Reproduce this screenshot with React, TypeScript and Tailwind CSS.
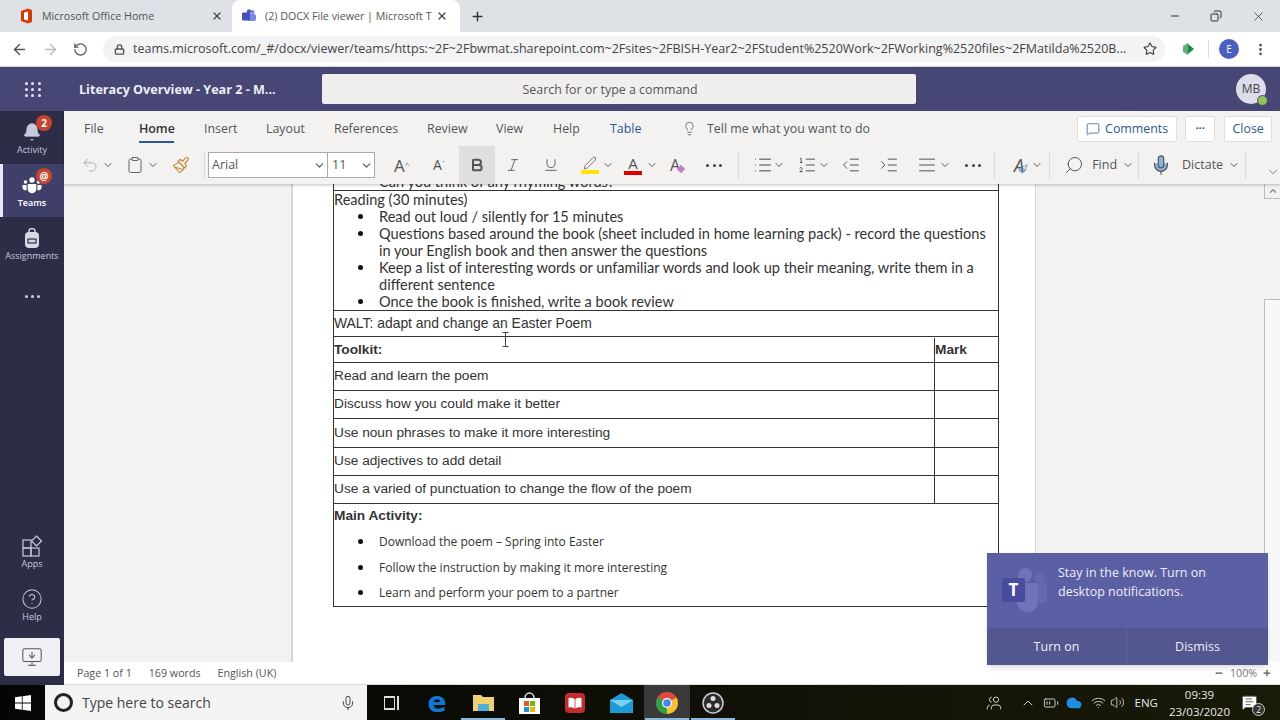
import type { ReactNode } from 'react';
import {
  ArrowLeft,
  ArrowRight,
  RotateCw,
  Lock,
  Star,
  X,
  Plus,
  Minus,
  Copy,
  ChevronDown,
  ChevronUp,
  Undo2,
  Clipboard,
  Paintbrush,
  Pen,
  Bold,
  Italic,
  Underline,
  Lightbulb,
  MessageSquare,
  Search,
  Mic,
  MoreVertical,
  Bell,
  HelpCircle,
  MonitorDown,
  List,
  ListOrdered,
  IndentDecrease,
  IndentIncrease,
  AlignJustify,
  Wifi,
  Volume2,
  Cloud,
  BatteryMedium,
  Users,
  MessageSquareText,
} from 'lucide-react';

const sans = { fontFamily: '"Open Sans", "Noto Sans", sans-serif' };
const arial = { fontFamily: '"Liberation Sans", Arial, sans-serif' };
const comic = { fontFamily: 'Lato, "Noto Sans", sans-serif' };

function RailItem({ label, icon, active }: { label: string; icon: ReactNode; active?: boolean }) {
  return (
    <div className={`relative flex h-[53px] flex-col items-center pt-[11px] ${active ? 'bg-[#3f4069] text-white' : 'text-[#c8c9dc]'}`}>
      {active && <div className="absolute top-0 bottom-0 left-0 w-[3px] bg-[#e8e8f8]" />}
      <div className="flex h-[20px] items-center justify-center">{icon}</div>
      <span className={`mt-[2px] text-[9px] leading-[11px] ${active ? 'font-semibold' : ''}`}>{label}</span>
    </div>
  );
}

function TaskIcon({ children, active, underline }: { children: ReactNode; active?: boolean; underline?: boolean }) {
  return (
    <div className={`relative flex h-[35px] w-[46px] items-center justify-center ${active ? 'bg-[#3a3a3a]' : ''}`}>
      {children}
      {underline && <div className="absolute right-[1px] bottom-0 left-[1px] h-[2px] bg-[#8cb8dc]" />}
    </div>
  );
}

function Dots({ className }: { className: string }) {
  return (
    <div className={`flex w-[16px] justify-between ${className}`}>
      <div className="h-[3px] w-[3px] rounded-full bg-[#444]" />
      <div className="h-[3px] w-[3px] rounded-full bg-[#444]" />
      <div className="h-[3px] w-[3px] rounded-full bg-[#444]" />
    </div>
  );
}

function Divider({ className }: { className: string }) {
  return <div className={`h-[28px] w-px bg-[#dcdad8] ${className}`} />;
}

function Bullet({ children, small }: { children: ReactNode; small?: boolean }) {
  return (
    <li className="flex">
      <div className={`mr-[16px] ml-[24px] h-[5px] w-[5px] shrink-0 rounded-full bg-[#111] ${small ? 'mt-[10px]' : 'mt-[6px]'}`} />
      <div>{children}</div>
    </li>
  );
}

const toolkit = [
  'Read and learn the poem',
  'Discuss how you could make it better',
  'Use noun phrases to make it more interesting',
  'Use adjectives to add detail',
  'Use a varied of punctuation to change the flow of the poem',
];

export default function App() {
  return (
    <div className="flex h-[720px] w-[1280px] flex-col overflow-hidden bg-white text-[#444]" style={sans}>
      {/* browser tabs */}
      <div className="flex h-[32px] items-end bg-[#dee1e6] pl-[8px]">
        <div className="flex h-[32px] w-[224px] items-center pl-[12px] pr-[9px] text-[10.7px] text-[#555]">
          <svg width="13" height="16" viewBox="0 0 13 16" className="mr-[9px] shrink-0">
            <path d="M1 3 L8 0.5 L12 2 V14 L8 15.5 L1 13 Z" fill="#d83b01" />
            <path d="M4 4.5 L8 3.5 V12.5 L4 11.5 Z" fill="#fff" />
          </svg>
          <span className="flex-1">Microsoft Office Home</span>
          <X size={12} strokeWidth={2.5} className="text-[#444]" />
        </div>
        <div className="flex h-[32px] w-[228px] items-center rounded-t-[8px] bg-white pl-[10px] pr-[12px] text-[10.7px] text-[#555]">
          <svg width="14" height="14" viewBox="0 0 14 14" className="mr-[9px] shrink-0">
            <circle cx="10.5" cy="3" r="2" fill="#7b83eb" />
            <circle cx="7" cy="2.5" r="2.2" fill="#5059c9" />
            <rect x="5" y="5" width="9" height="7" rx="2" fill="#7b83eb" />
            <rect x="0" y="3.5" width="8" height="8" rx="1" fill="#464eb8" />
          </svg>
          <span className="flex-1 overflow-hidden whitespace-nowrap">(2) DOCX File viewer | Microsoft T</span>
          <X size={12} strokeWidth={2.5} className="ml-[4px] shrink-0 text-[#444]" />
        </div>
        <div className="flex h-[32px] w-[34px] items-center justify-center">
          <Plus size={15} strokeWidth={2.2} className="text-[#333]" />
        </div>
        <div className="flex-1" />
        <div className="flex h-[32px] items-center gap-[29px] pr-[14px] text-[#333]">
          <Minus size={12} />
          <Copy size={12} className="-scale-x-100" />
          <X size={15} strokeWidth={1.2} />
        </div>
      </div>

      {/* address bar */}
      <div className="flex h-[34px] items-center bg-white pl-[11px] pr-[10px]">
        <ArrowLeft size={17} className="text-[#555]" />
        <ArrowRight size={17} className="ml-[14px] text-[#bbb]" />
        <RotateCw size={15} className="ml-[14px] -scale-x-100 text-[#555]" />
        <div className="ml-[15px] flex h-[26px] w-[1062px] items-center rounded-full bg-[#f1f3f4] pl-[11px] pr-[8px]">
          <Lock size={11} strokeWidth={3} className="text-[#555]" />
          <span className="ml-[8px] flex-1 overflow-hidden whitespace-nowrap text-[12.5px] text-[#444]">
            teams.microsoft.com/_#/docx/viewer/teams/https:~2F~2Fbwmat.sharepoint.com~2Fsites~2FBISH-Year2~2FStudent%2520Work~2FWorking%2520files~2FMatilda%2520B...
          </span>
          <Star size={14} className="ml-[12px] text-[#444]" />
        </div>
        <div className="ml-[13px] flex w-[22px] justify-center">
          <svg width="12" height="14" viewBox="0 0 12 14">
            <path d="M0 4 L5 1 V13 L0 10 Z" fill="#5fae7c" />
            <path d="M5 2 L11 7 L5 12 Z" fill="#1c8a46" />
          </svg>
        </div>
        <div className="ml-[8px] h-[18px] w-px bg-[#ddd]" />
        <div className="ml-[10px] flex h-[20px] w-[20px] items-center justify-center rounded-full bg-[#4a5fc1] text-[10px] text-white">E</div>
        <MoreVertical size={15} strokeWidth={2.5} className="ml-[14px] text-[#555]" />
      </div>

      {/* teams header */}
      <div className="relative flex h-[45px] items-center border-t border-[#d8d8e0] bg-[#464775]">
        <div className="ml-[25px] grid w-[16px] grid-cols-3 gap-[3px]">
          {[0, 1, 2, 3, 4, 5, 6, 7, 8].map((i) => (
            <div key={i} className="h-[3px] w-[3px] rounded-full bg-[#e6e6f0]" />
          ))}
        </div>
        <div className="ml-[38px] w-[243px] pt-[2px] text-[12.6px] font-bold text-[#eeeef5]">Literacy Overview - Year 2 - M...</div>
        <div className="flex h-[30px] w-[594px] items-center justify-center rounded-[2px] bg-[#f0efee] pt-[2px] pr-[18px] text-[12.4px] text-[#555]">
          Search for or type a command
        </div>
        <div className="absolute top-[7px] right-[14px] flex h-[30px] w-[30px] items-center justify-center rounded-full bg-[#dcdcec] text-[12px] text-[#444]">
          MB
          <div className="absolute right-[-2px] bottom-[-2px] h-[11px] w-[11px] rounded-full border border-[#464775] bg-[#92c353]" />
        </div>
      </div>

      <div className="flex flex-1 overflow-hidden">
        {/* teams rail */}
        <div className="flex w-[64px] shrink-0 flex-col bg-[#2d2d48]">
          <div className="relative">
            <RailItem label="Activity" icon={<Bell size={20} fill="currentColor" strokeWidth={1} />} />
            <div className="absolute top-[4px] left-[36px] flex h-[16px] w-[16px] items-center justify-center rounded-full bg-[#c8442f] text-[10px] font-bold text-white">2</div>
          </div>
          <div className="relative">
            <RailItem
              active
              label="Teams"
              icon={
                <svg width="20" height="20" viewBox="0 0 20 20" fill="currentColor">
                  <circle cx="10" cy="5" r="2.7" />
                  <circle cx="3.5" cy="7" r="1.8" />
                  <circle cx="16.5" cy="7" r="1.8" />
                  <path d="M5.7 9 H14.3 V14 A4.3 4.3 0 0 1 5.7 14 Z" />
                  <path d="M0.5 10 H4.6 V15 A3 3 0 0 1 0.5 13 Z" />
                  <path d="M15.4 10 H19.5 V13 A3 3 0 0 1 15.4 15 Z" />
                </svg>
              }
            />
            <div className="absolute top-[4px] left-[36px] flex h-[16px] w-[16px] items-center justify-center rounded-full bg-[#c8442f] text-[10px] font-bold text-white">@</div>
          </div>
          <RailItem
            label="Assignments"
            icon={
              <svg width="20" height="20" viewBox="0 0 20 20">
                <path d="M7 5 V3 A3 2.5 0 0 1 13 3 V5" fill="none" stroke="#d8d8e6" strokeWidth="1.4" />
                <rect x="3" y="4" width="14" height="16" rx="4" fill="#d8d8e6" />
                <rect x="6" y="11" width="8" height="4" fill="none" stroke="#2d2d48" strokeWidth="1.2" />
              </svg>
            }
          />
          <div className="flex h-[52px] items-center justify-center gap-[3px]">
            <div className="h-[3px] w-[3px] rounded-full bg-[#d0d0e0]" />
            <div className="h-[3px] w-[3px] rounded-full bg-[#d0d0e0]" />
            <div className="h-[3px] w-[3px] rounded-full bg-[#d0d0e0]" />
          </div>
          <div className="flex-1" />
          <RailItem
            label="Apps"
            icon={
              <svg width="22" height="22" viewBox="0 0 22 22" fill="none" stroke="currentColor" strokeWidth="1.2">
                <rect x="2" y="5" width="8" height="8" />
                <rect x="2" y="13" width="8" height="8" />
                <rect x="10" y="13" width="8" height="8" />
                <path d="M15.5 1 L20.5 6 L15.5 11 L10.5 6 Z" />
              </svg>
            }
          />
          <RailItem label="Help" icon={<HelpCircle size={22} strokeWidth={1.1} />} />
          <div className="mx-[4px] mt-[7px] mb-[9px] flex h-[38px] items-center justify-center rounded-[2px] bg-[#f0f0f7] text-[#555]">
            <MonitorDown size={22} strokeWidth={1.1} />
          </div>
        </div>

        {/* word viewer */}
        <div className="relative flex flex-1 flex-col bg-[#f3f2f1]">
          {/* ribbon */}
          <div className="relative z-10 h-[73px] shrink-0 bg-[#f3f2f1] shadow-[0_1px_3px_rgba(0,0,0,0.25)]">
            <div className="flex h-[35px] items-center pl-[20px] text-[12.4px] text-[#555]">
              <span className="w-[55px] pt-[1px]">File</span>
              <span className="relative w-[65px] pt-[1px] font-semibold text-[#333]">
                Home
                <span className="absolute top-[22px] left-0 h-[2px] w-[35px] bg-[#2b579a]" />
              </span>
              <span className="w-[62px] pt-[1px]">Insert</span>
              <span className="w-[68px] pt-[1px]">Layout</span>
              <span className="w-[93px] pt-[1px]">References</span>
              <span className="w-[69px] pt-[1px]">Review</span>
              <span className="w-[57px] pt-[1px]">View</span>
              <span className="w-[57px] pt-[1px]">Help</span>
              <span className="w-[72px] pt-[1px] text-[#2b579a]">Table</span>
              <Lightbulb size={15} strokeWidth={1.2} className="mr-[10px]" />
              <span className="pt-[1px]">Tell me what you want to do</span>
              <div className="flex-1" />
              <div className="flex h-[26px] w-[100px] items-center justify-center rounded-[2px] border border-[#e1dfdd] bg-white pt-[1px] text-[#2b579a]">
                <MessageSquare size={14} strokeWidth={1.3} className="mr-[5px]" />
                Comments
              </div>
              <div className="ml-[8px] flex h-[26px] w-[30px] items-center justify-center rounded-[2px] border border-[#e1dfdd] bg-white text-[11px] font-bold text-[#2b579a]">···</div>
              <div className="mr-[8px] ml-[9px] flex h-[26px] w-[48px] items-center justify-center rounded-[2px] border border-[#e1dfdd] bg-white pt-[1px] text-[#2b579a]">Close</div>
            </div>
            <div className="flex h-[38px] items-center pl-[17px] text-[#555]">
              <Undo2 size={18} strokeWidth={1.2} className="text-[#aaa]" />
              <ChevronDown size={12} className="ml-[3px]" />
              <Clipboard size={18} strokeWidth={1.2} className="ml-[12px]" />
              <ChevronDown size={12} className="ml-[3px]" />
              <Paintbrush size={18} strokeWidth={1.5} className="ml-[13px] text-[#c8862a]" />
              <Divider className="ml-[14px]" />
              <div className="ml-[3px] flex h-[26px] w-[120px] items-center justify-between border border-[#aaa] bg-white pl-[3px] pr-[1px] text-[12.5px]">
                Arial
                <ChevronDown size={13} />
              </div>
              <div className="-ml-px flex h-[26px] w-[48px] items-center justify-between border border-[#aaa] bg-white pl-[4px] pr-[1px] text-[12.5px]">
                11
                <ChevronDown size={13} />
              </div>
              <span className="ml-[19px] w-[16px] text-[17px] leading-none">A<sup className="text-[8px] text-[#777]">^</sup></span>
              <span className="ml-[23px] w-[12px] text-[14px] leading-none">A<sup className="text-[8px] text-[#3b82c4]">ˇ</sup></span>
              <div className="ml-[14px] flex h-[38px] w-[36px] items-center justify-center bg-[#e1dfdd]">
                <Bold size={16} strokeWidth={3} />
              </div>
              <Italic size={16} strokeWidth={1.3} className="ml-[10px]" />
              <Underline size={16} strokeWidth={1.3} className="ml-[22px]" />
              <div className="ml-[22px] flex w-[18px] flex-col items-center">
                <Pen size={14} strokeWidth={1.3} />
                <div className="h-[4px] w-[18px] bg-[#ffe600]" />
              </div>
              <ChevronDown size={12} className="ml-[3px]" />
              <div className="ml-[10px] flex w-[18px] flex-col items-center text-[15px] leading-[15px]">
                A
                <div className="h-[4px] w-[18px] bg-[#e00000]" />
              </div>
              <ChevronDown size={12} className="ml-[4px]" />
              <span className="ml-[12px] text-[16px] leading-none">A</span>
              <div className="-ml-[2px] mt-[8px] h-[6px] w-[6px] rotate-45 bg-[#c27fc4]" />
              <Dots className="ml-[22px]" />
              <Divider className="ml-[16px]" />
              <List size={20} strokeWidth={1.2} className="ml-[14px] text-[#444]" />
              <ChevronDown size={12} />
              <ListOrdered size={20} strokeWidth={1.2} className="ml-[12px]" />
              <ChevronDown size={12} className="ml-[1px]" />
              <IndentDecrease size={20} strokeWidth={1.2} className="ml-[11px]" />
              <IndentIncrease size={20} strokeWidth={1.2} className="ml-[18px]" />
              <AlignJustify size={20} strokeWidth={1.2} className="ml-[18px]" />
              <ChevronDown size={12} className="ml-[2px]" />
              <Dots className="ml-[14px]" />
              <Divider className="ml-[13px]" />
              <div className="relative ml-[18px] flex w-[12px] justify-center text-[18px] italic leading-none">
                A
                <Paintbrush size={10} strokeWidth={2} className="absolute right-[-3px] bottom-0 text-[#3b82c4]" />
              </div>
              <ChevronDown size={12} className="ml-[6px]" />
              <Divider className="ml-[6px]" />
              <Search size={20} strokeWidth={1.2} className="ml-[14px] -scale-x-100" />
              <span className="ml-[8px] text-[12.5px]">Find</span>
              <ChevronDown size={12} className="ml-[5px]" />
              <Divider className="ml-[4px]" />
              <Mic size={22} strokeWidth={1.3} fill="#8ab4e0" className="ml-[11px]" />
              <span className="ml-[10px] text-[12.5px]">Dictate</span>
              <ChevronDown size={12} className="ml-[5px]" />
              <Divider className="ml-[5px]" />
              <ChevronDown size={14} strokeWidth={1.2} className="ml-[20px] mt-[14px]" />
            </div>
          </div>

          {/* document canvas */}
          <div className="flex flex-1 overflow-hidden">
            <div className="w-[229px] shrink-0 border-r-2 border-[#d8d8d8]" />
            <div className="w-[743px] shrink-0 overflow-hidden border-r border-[#d8d8d8] bg-white pl-[40px]">
              <div className="-mt-[27px] w-[666px] text-[#333]">
                {/* reading block */}
                <div className="flex h-[34px] flex-col justify-end border-x border-b border-[#333] text-[14.55px] leading-[17px]" style={comic}>
                  <ul>
                    <Bullet>Can you think of any rhyming words?</Bullet>
                  </ul>
                </div>
                <div className="h-[120px] border-x border-b border-[#333] text-[14.55px] leading-[17px]" style={comic}>
                  <div className="h-[17px]">Reading (30 minutes)</div>
                  <ul>
                    <Bullet>Read out loud / silently for 15 minutes</Bullet>
                    <Bullet>Questions based around the book (sheet included in home learning pack) - record the questions in your English book and then answer the questions</Bullet>
                    <Bullet>Keep a list of interesting words or unfamiliar words and look up their meaning, write them in a different sentence</Bullet>
                    <Bullet>Once the book is finished, write a book review</Bullet>
                  </ul>
                </div>
                <div style={arial} className="text-[13.7px]">
                  <div className="flex h-[26px] items-center border-x border-b border-[#333] text-[13.9px]">WALT: adapt and change an Easter Poem</div>
                  <div className="flex h-[26px] border-x border-b border-[#333] pt-[1px] font-bold">
                    <div className="flex flex-1 items-center border-r border-[#333]">Toolkit:</div>
                    <div className="flex w-[63px] items-center">Mark</div>
                  </div>
                  {toolkit.map((t, i) => (
                    <div key={t} className={`flex border-x border-b border-[#333] ${i === 2 ? 'h-[29px]' : 'h-[28px]'}`}>
                      <div className="flex flex-1 items-center border-r border-[#333]">{t}</div>
                      <div className="w-[63px]" />
                    </div>
                  ))}
                  <div className="h-[103px] border-x border-b border-[#333]">
                    <div className="flex h-[25px] items-center font-bold">Main Activity:</div>
                    <ul className="text-[12px] leading-[25.5px]" style={sans}>
                      <Bullet small>Download the poem – Spring into Easter</Bullet>
                      <Bullet small>Follow the instruction by making it more interesting</Bullet>
                      <Bullet small>Learn and perform your poem to a partner</Bullet>
                    </ul>
                  </div>
                </div>
              </div>
            </div>
            <div className="flex-1" />
            {/* scrollbar */}
            <div className="flex w-[16px] flex-col">
              <div className="flex h-[15px] items-center justify-center border-b border-l border-[#bbb]">
                <ChevronUp size={10} strokeWidth={3} className="text-[#888]" />
              </div>
              <div className="h-[100px]" />
              <div className="flex-1 border-t border-l border-[#bbb] bg-[#f8f8f8]" />
            </div>
          </div>

          {/* status bar */}
          <div className="flex h-[23px] shrink-0 items-center border-b border-[#ddd] bg-white pl-[13px] pr-[8px] text-[10.7px] text-[#555]">
            <span>Page 1 of 1</span>
            <span className="ml-[17px]">169 words</span>
            <span className="ml-[17px]">English (UK)</span>
            <div className="flex-1" />
            <Minus size={10} strokeWidth={3} />
            <span className="ml-[6px] text-[#777]">100%</span>
            <Plus size={10} strokeWidth={3} className="ml-[5px]" />
          </div>

          {/* notification toast */}
          <div className="absolute top-[442px] left-[923px] z-20 flex h-[112px] w-[281px] flex-col bg-[#5b5fa3] text-[#eeeef8] shadow-md">
            <div className="flex flex-1 pl-[15px] pt-[10px] text-[12.5px] leading-[19px]">
              <svg width="46" height="46" viewBox="0 0 46 46" className="mt-[5px] mr-[10px] shrink-0">
                <circle cx="23" cy="7" r="7" fill="#7073b8" />
                <circle cx="38" cy="10" r="5" fill="#6669ad" />
                <rect x="36" y="15" width="9" height="20" rx="3" fill="#6669ad" />
                <path d="M15 15 H36 V34 A10.5 10.5 0 0 1 15 34 Z" fill="#7073b8" />
                <rect x="0" y="10" width="23" height="24" rx="2" fill="#474c9f" />
                <text x="11.5" y="28" textAnchor="middle" fontSize="17" fontWeight="700" fill="#fff">T</text>
              </svg>
              <div>
                Stay in the know. Turn on
                <br />
                desktop notifications.
              </div>
            </div>
            <div className="flex h-[37px] text-[12.5px]">
              <div className="flex w-[140px] items-center justify-center border-r border-[#5f63a5] bg-[#53568f] pt-[2px]">Turn on</div>
              <div className="flex flex-1 items-center justify-center bg-[#53568f] pt-[2px]">Dismiss</div>
            </div>
          </div>

          {/* text cursor */}
          <svg width="7" height="15" viewBox="0 0 7 15" className="absolute top-[221px] left-[438px] z-10">
            <path d="M0.5 0.5 H6.5 M3.5 0.5 V14.5 M0.5 14.5 H6.5" fill="none" stroke="#444" strokeWidth="1" />
          </svg>
        </div>
      </div>

      {/* windows taskbar */}
      <div className="flex h-[35px] shrink-0 items-center bg-linear-to-r from-[#050505] to-[#1a1a08]">
        <div className="flex w-[45px] justify-center">
          <svg width="16" height="16" viewBox="0 0 16 16">
            <path d="M0 2.3 L6.8 1.3 V7.6 H0 Z M7.6 1.2 L16 0 V7.6 H7.6 Z M0 8.4 H6.8 V14.7 L0 13.7 Z M7.6 8.4 H16 V16 L7.6 14.8 Z" fill="#fff" />
          </svg>
        </div>
        <div className="mr-[1px] flex h-[35px] w-[322px] items-center bg-[#f3f3f3] pl-[9px] text-[#444]">
          <div className="h-[19px] w-[19px] rounded-full border-[3px] border-[#222]" />
          <span className="ml-[9px] flex-1 text-[14px]">Type here to search</span>
          <Mic size={16} strokeWidth={1.5} className="mr-[11px]" />
        </div>
        <TaskIcon>
          <div className="flex items-center gap-[2px]">
            <div className="h-[14px] w-[11px] border-x border-y-2 border-[#ddd]" />
            <div className="h-[14px] w-[2px] bg-[#ddd]" />
          </div>
        </TaskIcon>
        <TaskIcon>
          <span className="text-[28px] leading-none font-bold text-[#0f78d4]" style={{ fontFamily: '"DejaVu Sans", sans-serif' }}>e</span>
        </TaskIcon>
        <TaskIcon underline>
          <svg width="21" height="19" viewBox="0 0 21 19">
            <path d="M0 2 H8 L10 4 H21 V18 H0 Z" fill="#f2cf70" />
            <rect x="5" y="11" width="11" height="7" fill="#4fb0d8" />
          </svg>
        </TaskIcon>
        <TaskIcon>
          <svg width="21" height="22" viewBox="0 0 21 22">
            <path d="M0 6 H21 V22 H0 Z" fill="#fff" />
            <path d="M6 6 A4.5 5 0 0 1 15 6" fill="none" stroke="#ddd" strokeWidth="1.5" />
            <rect x="5" y="9" width="5" height="5" fill="#e8562a" />
            <rect x="11" y="9" width="5" height="5" fill="#7ab800" />
            <rect x="5" y="15" width="5" height="5" fill="#1e90d8" />
            <rect x="11" y="15" width="5" height="5" fill="#f5b800" />
          </svg>
        </TaskIcon>
        <TaskIcon>
          <svg width="20" height="20" viewBox="0 0 20 20">
            <rect width="20" height="20" rx="4" fill="#c42b2b" />
            <path d="M3.5 5 Q7 4 9.6 6 V15.5 Q7 13.8 3.5 14.5 Z M16.5 5 Q13 4 10.4 6 V15.5 Q13 13.8 16.5 14.5 Z" fill="#fff" />
          </svg>
        </TaskIcon>
        <TaskIcon>
          <svg width="23" height="20" viewBox="0 0 23 20">
            <path d="M0 7 L11.5 0 L23 7 V20 H0 Z" fill="#1e9ad6" />
            <path d="M0 7 L11.5 14 L23 7" fill="#7fd0f5" />
          </svg>
        </TaskIcon>
        <TaskIcon active underline>
          <svg width="22" height="22" viewBox="0 0 22 22">
            <circle cx="11" cy="11" r="11" fill="#e04b3a" />
            <path d="M11 11 L1.5 5.5 A11 11 0 0 0 11 22 Z" fill="#2ba24c" />
            <path d="M11 11 L20.5 5.5 A11 11 0 0 1 11 22 Z" fill="#fbc02d" />
            <circle cx="11" cy="11" r="5" fill="#fff" />
            <circle cx="11" cy="11" r="3.8" fill="#4285f4" />
          </svg>
        </TaskIcon>
        <TaskIcon underline>
          <svg width="22" height="22" viewBox="0 0 22 22">
            <circle cx="11" cy="11" r="10" fill="#2d2d2d" stroke="#ccc" strokeWidth="1.5" />
            <circle cx="11" cy="6.5" r="2.5" fill="#ddd" />
            <circle cx="7" cy="13.5" r="2.5" fill="#ddd" />
            <circle cx="15" cy="13.5" r="2.5" fill="#ddd" />
          </svg>
        </TaskIcon>
        <div className="flex-1" />
        <div className="flex items-center text-[#e8e8e8]">
          <Users size={16} strokeWidth={1.3} className="-scale-x-100" />
          <ChevronUp size={16} strokeWidth={1.3} className="ml-[18px]" />
          <BatteryMedium size={16} strokeWidth={1.3} className="ml-[7px]" />
          <Cloud size={16} fill="#1e90e0" stroke="#1e90e0" className="ml-[7px]" />
          <Wifi size={15} strokeWidth={1.3} className="ml-[9px]" />
          <Volume2 size={15} strokeWidth={1.3} className="ml-[4px]" />
          <span className="ml-[10px] text-[11.5px]">ENG</span>
          <div className="ml-[11px] flex flex-col items-center text-[11.5px] leading-[17px]">
            <span>09:39</span>
            <span>23/03/2020</span>
          </div>
          <div className="relative mr-[22px] ml-[11px]">
            <MessageSquareText size={17} fill="#fff" stroke="#555" strokeWidth={1.3} />
            <div className="absolute right-[-7px] bottom-[-5px] flex h-[13px] w-[13px] items-center justify-center rounded-full border border-[#ccc] bg-[#333] text-[9px]">2</div>
          </div>
        </div>
      </div>
    </div>
  );
}
